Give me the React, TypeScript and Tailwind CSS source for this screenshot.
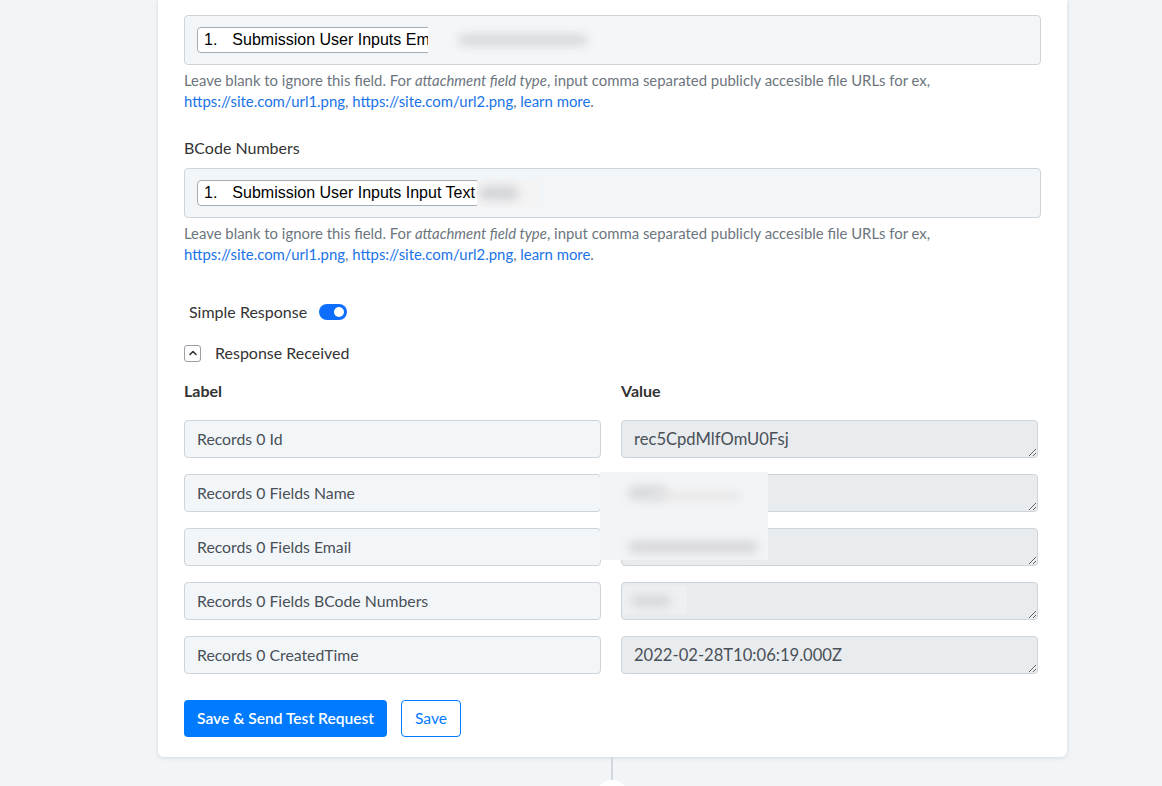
import React from "react";

const font = { fontFamily: "Lato, 'Open Sans', sans-serif" };

function HelpText() {
  return (
    <p className="mt-[5px] text-[14.9px] leading-[21px] text-[#6c757d]" style={font}>
      Leave blank to ignore this field. For <i>attachment field type</i>, input comma separated publicly accesible file URLs for ex,
      <br />
      <span className="text-[#1a73e8]">https://site.com/url1.png</span>,{" "}
      <span className="text-[#1a73e8]">https://site.com/url2.png</span>,{" "}
      <span className="text-[#1a73e8]">learn more</span>.
    </p>
  );
}

function TokenBox({ text, children }: { text: string; children?: React.ReactNode }) {
  return (
    <div className="relative h-[50px] rounded-[4px] border border-[#ced4da] bg-[#f3f6f9] px-[12px] py-[11px]">
      <div
        className="inline-flex h-[26px] items-center rounded-[4px] border border-[#a9adb3] bg-white pl-[6px] pr-[4px] text-[16px] text-black"
        style={{ fontFamily: "'Liberation Sans', Arial, sans-serif" }}
      >
        <span>1.</span>
        <span className="ml-[15px] whitespace-pre">{text}</span>
      </div>
      {children}
    </div>
  );
}

const rows = [
  { label: "Records 0 Id", value: "rec5CpdMlfOmU0Fsj" },
  { label: "Records 0 Fields Name", value: "" },
  { label: "Records 0 Fields Email", value: "" },
  { label: "Records 0 Fields BCode Numbers", value: "" },
  { label: "Records 0 CreatedTime", value: "2022-02-28T10:06:19.000Z" },
];

export default function App() {
  return (
    <div className="min-h-[786px] w-[1162px] overflow-hidden bg-[#f2f5f8]" style={font}>
      <div className="ml-[158px] w-[909px] rounded-b-[6px] bg-white px-[26px] pb-[20px] pt-[15px] shadow-[0_1px_4px_rgba(0,0,0,0.12)]">
        <TokenBox text="Submission User Inputs Email">
          <div className="absolute left-[243px] top-[4px] h-[42px] w-[195px] bg-[#f5f6f7]">
            <div className="absolute left-[30px] top-[14px] h-[12px] w-[130px] rounded-full bg-[#d9dadc] blur-[5px]" />
          </div>
        </TokenBox>
        <HelpText />

        <div className="mt-[25px] text-[16px] leading-[22px] text-[#333]">BCode Numbers</div>
        <div className="mt-[9px]">
          <TokenBox text="Submission User Inputs Input Text">
            <div className="absolute left-[292px] top-[10px] h-[28px] w-[64px] bg-[#f4f4f5]">
              <div className="absolute left-[2px] top-[7px] h-[14px] w-[40px] rounded-full bg-[#d3d4d6] blur-[5px]" />
            </div>
          </TokenBox>
        </div>
        <HelpText />

        <div className="ml-[5px] mt-[36px] flex items-center gap-[12px]">
          <span className="text-[16px] leading-[22px] text-[#333]">Simple Response</span>
          <span className="relative inline-block h-[16px] w-[28px] rounded-full bg-[#0d6efd]">
            <span className="absolute right-[3px] top-[3px] h-[10px] w-[10px] rounded-full bg-white" />
          </span>
        </div>

        <div className="mt-[19px] flex items-center gap-[14px]">
          <span className="flex h-[17px] w-[17px] items-center justify-center rounded-[3px] border border-[#9aa0a6]">
            <svg width="10" height="10" viewBox="0 0 10 10" fill="none">
              <path d="M2 6.5 L5 3.5 L8 6.5" stroke="#333" strokeWidth="1.6" strokeLinecap="round" strokeLinejoin="round" />
            </svg>
          </span>
          <span className="text-[16px] leading-[22px] text-[#333]">Response Received</span>
        </div>

        <div className="relative mt-[16px] w-[854px]">
          <div className="grid grid-cols-2 gap-x-[20px]">
            <div className="text-[16px] font-bold leading-[22px] text-[#333]">Label</div>
            <div className="text-[16px] font-bold leading-[22px] text-[#333]">Value</div>
          </div>
          <div className="mt-[18px] flex flex-col gap-[16px]">
            {rows.map((r, i) => (
              <div key={i} className="grid grid-cols-2 gap-x-[20px]">
                <div className="flex h-[38px] items-center rounded-[4px] border border-[#ced4da] bg-[#f3f6f9] px-[12px] text-[15.8px] text-[#495057]">
                  {r.label}
                </div>
                <div className="relative">
                  <textarea
                    readOnly
                    value={r.value}
                    rows={1}
                    className="block h-[38px] w-full resize-y rounded-[4px] border border-[#ced4da] bg-[#e9ecef] px-[12px] pt-[6px] text-[16.6px] leading-[24px] text-[#495057] outline-none"
                    style={font}
                  />
                  {i === 3 && (
                    <div className="absolute left-[2px] top-[4px] h-[28px] w-[64px] bg-[#eef0f2]">
                      <div className="absolute left-[8px] top-[9px] h-[12px] w-[40px] rounded-full bg-[#d6d8da] blur-[5px]" />
                    </div>
                  )}
                </div>
              </div>
            ))}
          </div>
          <div className="absolute left-[416px] top-[92px] h-[88px] w-[168px] bg-[#f3f4f5]">
            <div className="absolute left-[28px] top-[14px] h-[14px] w-[40px] rounded-full bg-[#d8d9db] blur-[5px]" />
            <div className="absolute left-[50px] top-[20px] h-[8px] w-[90px] rounded-full bg-[#e6e7e8] blur-[4px]" />
            <div className="absolute left-[28px] top-[69px] h-[12px] w-[130px] rounded-full bg-[#d6d7d9] blur-[5px]" />
          </div>
        </div>

        <div className="mt-[26px] flex items-center gap-[14px]">
          <button className="h-[37px] rounded-[4px] bg-[#007bff] px-[13px] text-[15.6px] font-semibold text-white">
            Save &amp; Send Test Request
          </button>
          <button className="h-[37px] rounded-[4px] border border-[#007bff] bg-white px-[13px] text-[15.6px] text-[#007bff]">
            Save
          </button>
        </div>
      </div>
      <div className="ml-[611px] h-[23px] w-[2px] bg-[#d3d7dd]" />
      <div className="ml-[596px] h-[32px] w-[32px] rounded-full bg-white" />
    </div>
  );
}
